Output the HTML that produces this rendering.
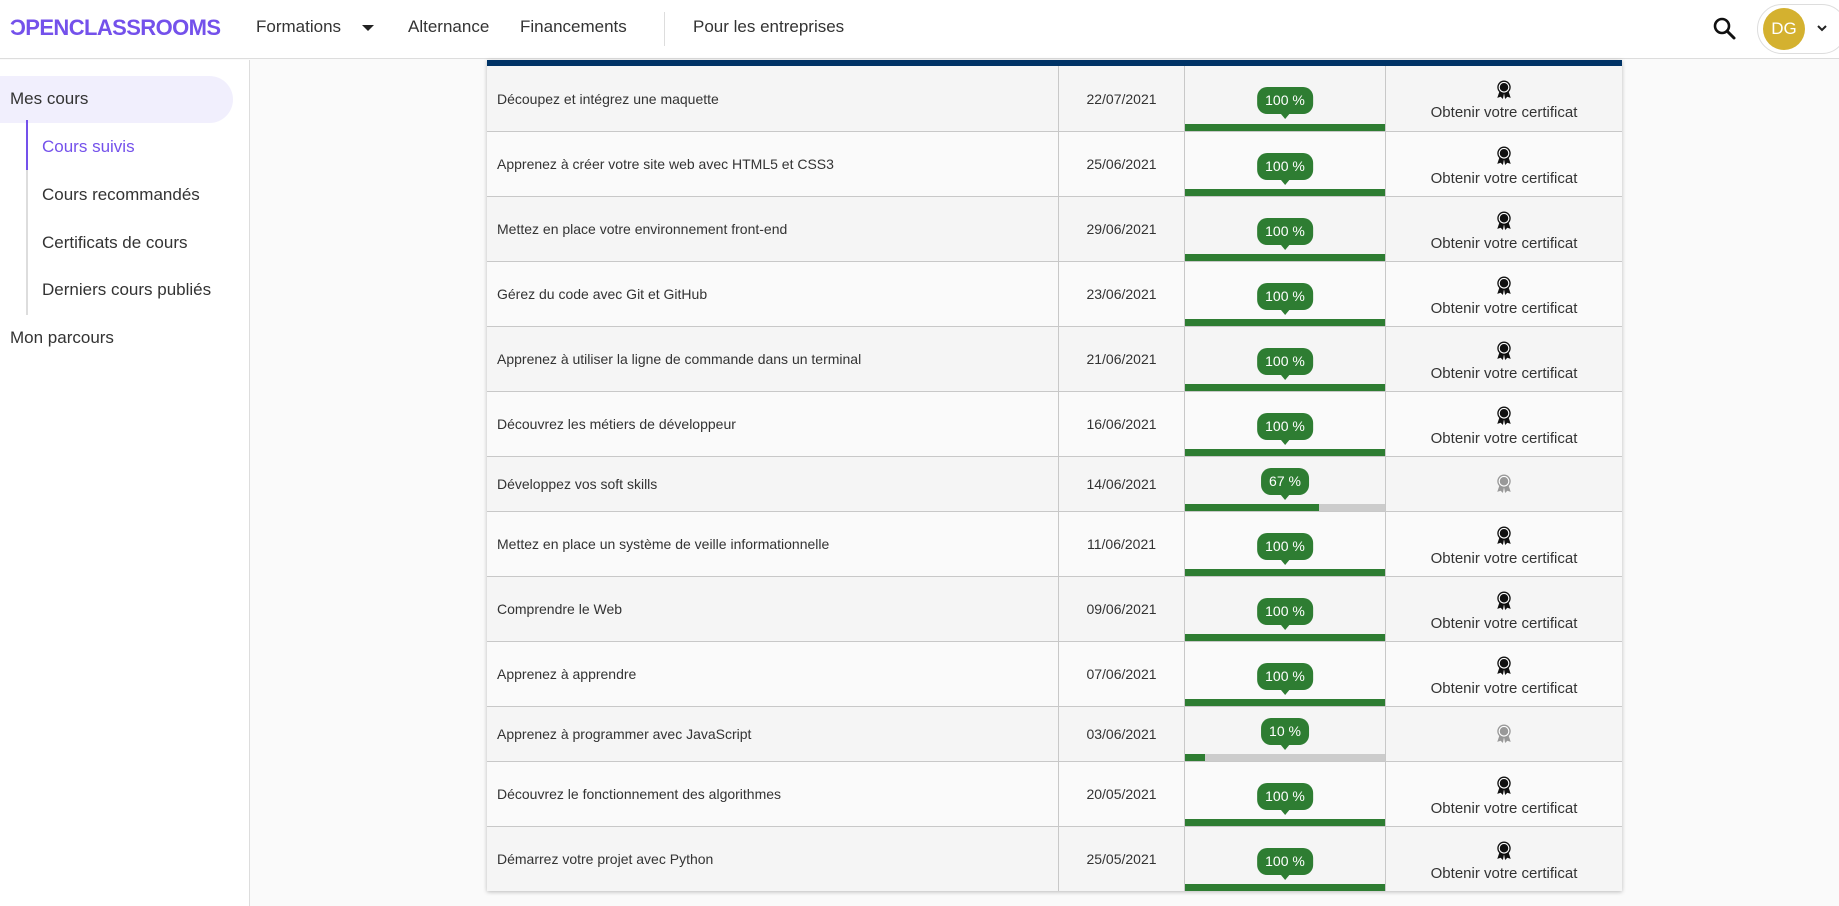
<!DOCTYPE html>
<html><head><meta charset="utf-8"><style>
*{box-sizing:border-box;margin:0;padding:0}
body{width:1839px;height:906px;overflow:hidden;background:#fafafa;font-family:"Liberation Sans",sans-serif;color:#222;position:relative}
.hdr{position:absolute;left:0;top:0;width:1839px;height:59px;background:#fff;border-bottom:1px solid #ddd}
.logo{position:absolute;left:10px;top:15px;font-weight:bold;font-size:22px;color:#7451eb;letter-spacing:-0.6px}
.nav{position:absolute;top:17px;font-size:17px;color:#333}
.side{position:absolute;left:0;top:60px;width:250px;height:846px;background:#fff;border-right:1px solid #ddd}
.pill{position:absolute;left:0;top:16px;width:233px;height:47px;background:#f1effd;border-radius:0 24px 24px 0}
.si{position:absolute;font-size:17px;color:#333}
.vl{position:absolute;left:26px;top:60px;width:2px;height:195px;background:#ddd}
.va{position:absolute;left:26px;top:60px;width:2px;height:50px;background:#7451eb}
.tbl{position:absolute;left:487px;top:60px;width:1135px;box-shadow:0 1px 4px rgba(0,0,0,.25);background:#f5f5f5}
.top{height:6px;background:#003366}
.row{position:relative;border-top:1px solid #c8c8c8;font-size:14px;color:#333}
.row:first-of-type{border-top:none}
.c{position:absolute;top:0;bottom:0}
.c1{left:0;width:571px;padding-left:10px;display:flex;align-items:center}
.c2{left:571px;width:126px;border-left:1px solid #c8c8c8;display:flex;align-items:center;justify-content:center}
.c3{left:697px;width:201px;border-left:1px solid #c8c8c8}
.c4{left:898px;right:0;border-left:1px solid #c8c8c8;text-align:center}
.bar{position:absolute;left:0;right:0;bottom:0;height:7px;background:#ccc}
.bar i{display:block;height:100%;background:#2e7d32}
.badge{position:absolute;left:50%;transform:translateX(-50%);background:#2e7d32;color:#fff;font-size:14px;border-radius:10px;padding:5px 8px;line-height:17px;white-space:nowrap}
.badge:after{content:"";position:absolute;left:50%;margin-left:-5px;bottom:-5px;border-left:5px solid transparent;border-right:5px solid transparent;border-top:6px solid #2e7d32}
.med{position:absolute;left:50%;margin-left:-8px}
.ct{position:absolute;left:0;right:0;font-size:15px;color:#333}
</style></head><body>
<div class="hdr">
<div class="logo">ƆPENCLASSROOMS</div>
<div class="nav" style="left:256px">Formations</div>
<div style="position:absolute;left:362px;top:25px;border-left:6px solid transparent;border-right:6px solid transparent;border-top:6px solid #222"></div>
<div class="nav" style="left:408px">Alternance</div>
<div class="nav" style="left:520px">Financements</div>
<div style="position:absolute;left:664px;top:12px;width:1px;height:34px;background:#ddd"></div>
<div class="nav" style="left:693px">Pour les entreprises</div>
<svg style="position:absolute;left:1712px;top:16px" width="26" height="26" viewBox="0 0 26 26"><circle cx="10" cy="10" r="7" fill="none" stroke="#111" stroke-width="2.6"/><path d="M15 15l7 7" stroke="#111" stroke-width="3" stroke-linecap="round"/></svg>
<div style="position:absolute;left:1757px;top:4px;width:90px;height:50px;border:1px solid #ddd;border-radius:25px;background:#fff"></div>
<div style="position:absolute;left:1763px;top:8px;width:42px;height:42px;border-radius:50%;background:#d4b12f;color:#fff;font-size:17px;text-align:center;line-height:42px">DG</div>
<svg style="position:absolute;left:1816px;top:24px" width="12" height="10" viewBox="0 0 12 10"><path d="M2 2l4 4 4-4" fill="none" stroke="#222" stroke-width="2"/></svg>
</div>
<div class="side">
<div class="pill"></div>
<div class="si" style="left:10px;top:29px">Mes cours</div>
<div class="vl"></div><div class="va"></div>
<div class="si" style="left:42px;top:77px;color:#7451eb">Cours suivis</div>
<div class="si" style="left:42px;top:125px">Cours recommandés</div>
<div class="si" style="left:42px;top:173px">Certificats de cours</div>
<div class="si" style="left:42px;top:220px">Derniers cours publiés</div>
<div class="si" style="left:10px;top:268px">Mon parcours</div>
</div>
<div class="tbl"><div class="top"></div>
<div id="rows"></div>
</div>
<script>
var d=[["Découpez et intégrez une maquette","22/07/2021",100],["Apprenez à créer votre site web avec HTML5 et CSS3","25/06/2021",100],["Mettez en place votre environnement front-end","29/06/2021",100],["Gérez du code avec Git et GitHub","23/06/2021",100],["Apprenez à utiliser la ligne de commande dans un terminal","21/06/2021",100],["Découvrez les métiers de développeur","16/06/2021",100],["Développez vos soft skills","14/06/2021",67],["Mettez en place un système de veille informationnelle","11/06/2021",100],["Comprendre le Web","09/06/2021",100],["Apprenez à apprendre","07/06/2021",100],["Apprenez à programmer avec JavaScript","03/06/2021",10],["Découvrez le fonctionnement des algorithmes","20/05/2021",100],["Démarrez votre projet avec Python","25/05/2021",100]];
function med(c){return '<svg width="16" height="19" viewBox="0 0 14 17"><path d="M3 10l-2 6 3-1 2 2 1-5M11 10l2 6-3-1-2 2-1-5" fill="'+c+'"/><circle cx="7" cy="6.5" r="6" fill="'+c+'"/><circle cx="7" cy="6.5" r="4.3" fill="none" stroke="#fff" stroke-width="1"/></svg>';}
var h='';d.forEach(function(r,i){var full=r[2]==100,H=full?65:55;
h+='<div class="row" style="height:'+H+'px;background:'+(i%2?'#fafafa':'#f5f5f5')+'"><div class="c c1">'+r[0]+'</div><div class="c c2">'+r[1]+'</div><div class="c c3"><div class="badge" style="top:'+(full?21:11)+'px">'+r[2]+' %</div><div class="bar"><i style="width:'+r[2]+'%"></i></div></div><div class="c c4">'+(full?'<div class="med" style="top:14px">'+med('#111')+'</div><div class="ct" style="top:38px">Obtenir votre certificat</div>':'<div class="med" style="top:17px">'+med('#999')+'</div>')+'</div></div>';});
document.getElementById('rows').innerHTML=h;
</script>
</body></html>
